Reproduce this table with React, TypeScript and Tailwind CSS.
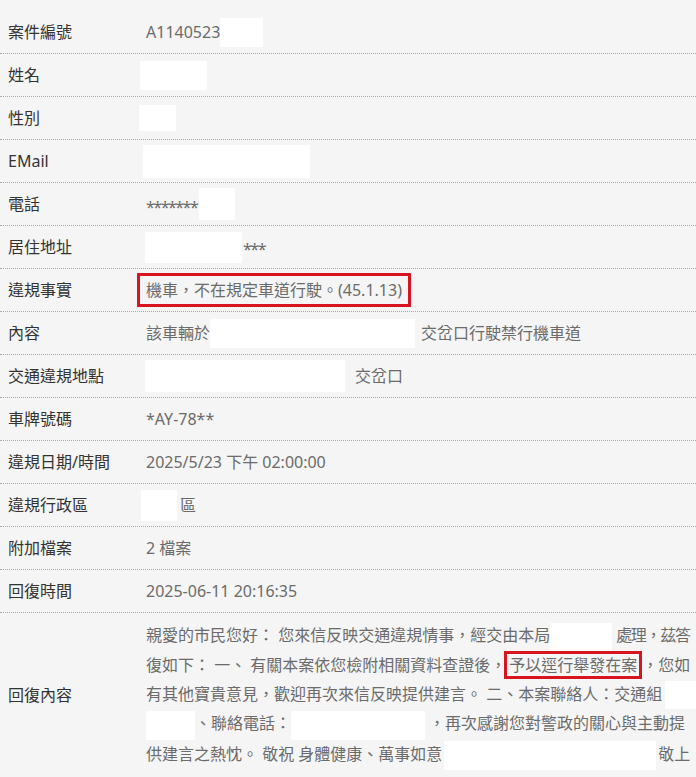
import React from 'react';

// white blocks that hide personal data in the screenshot
function Mask({ w, h, className = '' }: { w: string; h: string; className?: string }) {
  return <span className={`inline-block bg-white align-middle ${w} ${h} ${className}`} />;
}

function Row({ label, children }: { label: string; children: React.ReactNode }) {
  return (
    <div className="flex h-[43px] items-center border-b border-dotted border-[#a8a8a8]">
      <div className="w-[146px] shrink-0 pl-[8px] text-[#333]">{label}</div>
      <div className="flex items-center text-[#6b6b6b] whitespace-nowrap">{children}</div>
    </div>
  );
}

export default function App() {
  return (
    <div
      className="h-[777px] w-[696px] overflow-hidden bg-[#f5f5f5] pt-[11px] text-[16px] leading-[29px]"
      style={{ fontFamily: '"Noto Sans", "Noto Sans CJK TC", sans-serif' }}
    >
      <Row label="案件編號">
        <span>A1140523</span>
        <Mask w="w-[43px]" h="h-[29px]" />
      </Row>
      <Row label="姓名">
        <Mask w="w-[67px]" h="h-[29px]" className="-ml-[6px]" />
      </Row>
      <Row label="性別">
        <Mask w="w-[37px]" h="h-[26px]" className="-ml-[7px]" />
      </Row>
      <Row label="EMail">
        <Mask w="w-[167px]" h="h-[33px]" className="-ml-[3px]" />
      </Row>
      <Row label="電話">
        <span className="pt-[6px] tracking-[-1.5px]">*******</span>
        <Mask w="w-[36px]" h="h-[32px]" className="ml-[2px]" />
      </Row>
      <Row label="居住地址">
        <Mask w="w-[97px]" h="h-[31px]" className="-ml-[1px]" />
        <span className="ml-[1px] pt-[4px] tracking-[-1.5px]">***</span>
      </Row>
      <Row label="違規事實">
        <span className="-ml-[9px] border-[3px] border-[#d7141f] px-[6px] leading-[28px]">
          機車，不在規定車道行駛。(45.1.13)
        </span>
      </Row>
      <Row label="內容">
        <span>該車輛於</span>
        <Mask w="w-[205px]" h="h-[29px]" />
        <span className="ml-[6px]">交岔口行駛禁行機車道</span>
      </Row>
      <Row label="交通違規地點">
        <Mask w="w-[200px]" h="h-[32px]" className="-ml-[1px]" />
        <span className="ml-[10px]">交岔口</span>
      </Row>
      <Row label="車牌號碼">
        <span>*AY-78**</span>
      </Row>
      <Row label="違規日期/時間">
        <span>2025/5/23 下午 02:00:00</span>
      </Row>
      <Row label="違規行政區">
        <Mask w="w-[36px]" h="h-[31px]" className="-ml-[5px]" />
        <span className="ml-[3px]">區</span>
      </Row>
      <Row label="附加檔案">
        <span>2 檔案</span>
      </Row>
      <Row label="回復時間">
        <span>2025-06-11 20:16:35</span>
      </Row>
      <div className="flex items-center pt-[8px] pb-[8px]">
        <div className="w-[146px] shrink-0 pl-[8px] text-[#333]">回復內容</div>
        <div className="text-[#6b6b6b] whitespace-nowrap">
          <div>
            親愛的市民您好： 您來信反映交通違規情事，經交由本局
            <Mask w="w-[62px]" h="h-[28px]" className="mr-[4px]" />
            <span className="tracking-[-1.3px]">處理，茲答</span>
          </div>
          <div>
            復如下： 一、 有關本案依您檢附相關資料查證後，
            <span className="-ml-[2px] border-[3px] border-[#d7141f] px-[2px] leading-[23px]">予以逕行舉發在案</span>
            ，您如
          </div>
          <div>
            有其他寶貴意見，歡迎再次來信反映提供建言。 二、本案聯絡人：交通組
            <Mask w="w-[40px]" h="h-[28px]" className="ml-[3px]" />
          </div>
          <div>
            <Mask w="w-[49px]" h="h-[29px]" />
            、聯絡電話：
            <Mask w="w-[134px]" h="h-[29px]" className="mr-[4px]" />
            ，再次感謝您對警政的關心與主動提
          </div>
          <div>
            供建言之熱忱。 敬祝 身體健康、萬事如意
            <Mask w="w-[212px]" h="h-[29px]" className="mx-[2px]" />
            敬上
          </div>
        </div>
      </div>
    </div>
  );
}
